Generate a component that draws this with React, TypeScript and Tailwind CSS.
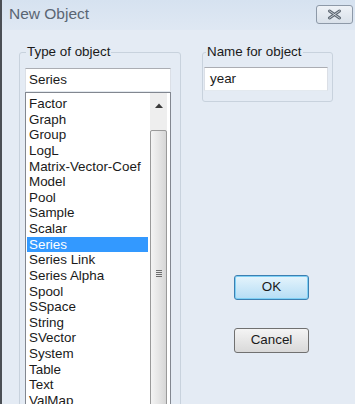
const ITEMS = [
  'Factor',
  'Graph',
  'Group',
  'LogL',
  'Matrix-Vector-Coef',
  'Model',
  'Pool',
  'Sample',
  'Scalar',
  'Series',
  'Series Link',
  'Series Alpha',
  'Spool',
  'SSpace',
  'String',
  'SVector',
  'System',
  'Table',
  'Text',
  'ValMap',
];

const FONT = { fontFamily: '"Liberation Sans", Arial, sans-serif' };

export default function App() {
  return (
    <div
      className="w-[355px] h-[404px] overflow-hidden flex flex-col bg-[#e4ebf4] border-l-2 border-[#4b4f55] text-[13.4px] text-[#1a1a1a]"
      style={FONT}
    >
      {/* title bar */}
      <div className="h-[30px] shrink-0 flex items-start bg-gradient-to-b from-[#d6e2f0] to-[#dfe8f3]">
        <span className="ml-[7px] mt-[5px] text-[15.5px] text-[#5a6573] leading-[18px]">New Object</span>
        <button className="ml-auto mr-[2px] mt-[5px] w-[37px] h-[19px] rounded-[3px] border border-[#8d99a8] bg-gradient-to-b from-[#eef2f7] to-[#d9e1ea] flex items-center justify-center">
          <svg width="15" height="11" viewBox="0 0 15 11">
            <path d="M2.5 2 L12.5 9 M12.5 2 L2.5 9" stroke="#5d6772" strokeWidth="3" strokeLinecap="round" />
            <path d="M2.5 2 L12.5 9 M12.5 2 L2.5 9" stroke="#d3d9e0" strokeWidth="0.9" strokeLinecap="round" />
          </svg>
        </button>
      </div>

      {/* body */}
      <div className="flex pl-[17px] pt-[14px]">
        {/* Type of object */}
        <fieldset className="w-[162px] h-[420px] shrink-0 border border-[#c8d2dd] rounded-[3px] pl-[5px] pr-[9px] pt-[8px]">
          <legend className="ml-[1px] px-[1px] leading-[16px]">Type of object</legend>
          <div className="h-[24px] bg-white border border-[#abadb3] border-b-[#e3e9ef] border-x-[#dbdfe6] pl-[3px] leading-[22px]">
            Series
          </div>
          <div className="h-[330px] bg-white border border-[#828790] flex">
            <div className="flex-1 pl-[1px] pr-[2px] pt-[3px]">
              {ITEMS.map((item) => (
                <div
                  key={item}
                  className={
                    'h-[15.63px] leading-[15.63px] pl-[2px] whitespace-nowrap ' +
                    (item === 'Series' ? 'bg-[#3399ff] text-white' : '')
                  }
                >
                  {item}
                </div>
              ))}
            </div>
            <div className="w-[17px] mr-[3px] flex flex-col bg-[#ececec]">
              <div className="h-[37px] shrink-0 flex justify-center pt-[10px] bg-[#eeeeee]">
                <svg width="8" height="5" viewBox="0 0 8 5">
                  <path d="M0 5 L4 0.5 L8 5 Z" fill="#3a3a3a" />
                </svg>
              </div>
              <div className="flex-1 border border-[#9a9a9a] rounded-[2px] bg-gradient-to-r from-[#f4f4f4] via-[#e6e6e6] to-[#d6d6d6] flex flex-col items-center pt-[139px]">
                <div className="w-[6px] h-[1px] bg-[#6d6d6d] mb-[1px]" />
                <div className="w-[6px] h-[1px] bg-[#6d6d6d] mb-[1px]" />
                <div className="w-[6px] h-[1px] bg-[#6d6d6d] mb-[1px]" />
                <div className="w-[6px] h-[1px] bg-[#6d6d6d]" />
              </div>
            </div>
          </div>
        </fieldset>

        {/* right column */}
        <div className="ml-[21px] flex flex-col">
          <fieldset className="w-[131px] border border-[#c8d2dd] rounded-[3px] pl-[1px] pr-[4px] pt-[7px] pb-[10px]">
            <legend className="ml-[2px] px-[1px] leading-[16px]">Name for object</legend>
            <div className="h-[24px] bg-white border border-[#abadb3] border-b-[#e3e9ef] border-x-[#dbdfe6] pl-[5px] leading-[22px]">
              year
            </div>
          </fieldset>

          <button className="ml-[32px] mt-[173px] w-[75px] h-[25px] rounded-[3px] border border-[#3c7fb1] bg-gradient-to-b from-[#e5f4fc] to-[#b5ddf5] shadow-[inset_0_0_0_1px_#7fd0f5] text-[13.4px] text-[#1a1a1a]">
            OK
          </button>
          <button className="ml-[32px] mt-[28px] w-[75px] h-[25px] rounded-[3px] border border-[#707070] bg-gradient-to-b from-[#f4f4f4] to-[#d9d9d9] text-[13.4px] text-[#1a1a1a]">
            Cancel
          </button>
        </div>
      </div>
    </div>
  );
}
